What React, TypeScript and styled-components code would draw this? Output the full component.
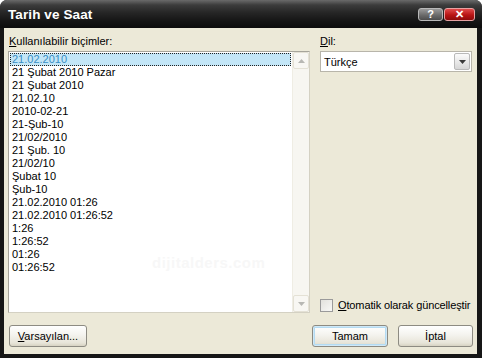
import styled, { createGlobalStyle } from "styled-components";

const GlobalStyle = createGlobalStyle`
  html, body {
    margin: 0;
    padding: 0;
    background: #ffffff;
  }
  body {
    font-family: "Liberation Sans", Arial, sans-serif;
    font-size: 11px;
    color: #000;
  }
`;

const Window = styled.div`
  width: 482px;
  height: 358px;
  display: flex;
  flex-direction: column;
  background: #161616;
  border-radius: 7px 7px 0 0;
  overflow: hidden;
`;

const TitleBar = styled.div`
  height: 28px;
  flex: none;
  display: flex;
  align-items: center;
  justify-content: space-between;
  padding: 0 7px 0 8px;
  background: linear-gradient(#6a6a6a 0, #3c3c3c 18%, #262626 45%, #151515 75%, #0c0c0c 100%);
`;

const Title = styled.span`
  color: #ffffff;
  font-weight: bold;
  font-size: 13.5px;
  letter-spacing: 0.1px;
`;

const Caption = styled.div`
  display: flex;
  gap: 1px;
  align-items: center;
`;

const CaptionButton = styled.div<{ $close?: boolean }>`
  width: ${(p) => (p.$close ? 31 : 25)}px;
  height: 13px;
  border-radius: 3px;
  border: 1px solid ${(p) => (p.$close ? "#e7a2a2" : "#b9b9b9")};
  box-sizing: border-box;
  display: flex;
  align-items: center;
  justify-content: center;
  color: #ffffff;
  font-weight: bold;
  font-size: 11px;
  background: ${(p) =>
    p.$close
      ? "linear-gradient(#e04a4a, #b81414 55%, #8e0b0b)"
      : "linear-gradient(#9a9a9a, #6b6b6b 55%, #4c4c4c)"};
`;

const Body = styled.div`
  flex: 1;
  margin: 0 5px 4px 4px;
  background: #ece9d8;
  padding: 7px 4px 7px 4px;
  display: grid;
  grid-template-columns: 302px 1fr;
  grid-template-rows: 1fr auto;
  column-gap: 10px;
  row-gap: 12px;
  min-height: 0;
`;

const Column = styled.div`
  display: flex;
  flex-direction: column;
  min-height: 0;
`;

const Label = styled.div<{ $indent?: number }>`
  line-height: 13px;
  height: 13px;
  margin: 0 0 3px ${(p) => p.$indent ?? 0}px;
  white-space: nowrap;
`;

const ListBox = styled.div`
  flex: 1;
  display: flex;
  border: 1px solid #a7a59b;
  border-right-color: #d4d1c3;
  border-bottom-color: #d4d1c3;
  background: #ffffff;
  min-height: 0;
`;

const Items = styled.div`
  position: relative;
  flex: 1;
  padding: 1px;
  overflow: hidden;
`;

const Item = styled.div<{ $selected?: boolean }>`
  height: 13px;
  box-sizing: border-box;
  white-space: nowrap;
  color: ${(p) => (p.$selected ? "#3b8fc4" : "#000")};
  background: ${(p) => (p.$selected ? "#c3e6f7" : "transparent")};
  border: ${(p) => (p.$selected ? "1px dotted #222" : "none")};
  padding-left: ${(p) => (p.$selected ? "1px" : "2px")};
  line-height: ${(p) => (p.$selected ? "11px" : "13px")};
`;

const Watermark = styled.div`
  position: absolute;
  left: 143px;
  top: 202px;
  font-size: 15px;
  font-weight: bold;
  color: #f7f7f7;
  letter-spacing: 0.5px;
`;

const ScrollBar = styled.div`
  width: 17px;
  flex: none;
  display: flex;
  flex-direction: column;
  background: #f7f6f1;
  border-left: 1px solid #efede4;
  box-sizing: border-box;
`;

const ScrollButton = styled.div`
  height: 17px;
  flex: none;
  box-sizing: border-box;
  border: 1px solid #e4e1d5;
  border-radius: 2px;
  background: #f8f7f3;
  display: flex;
  align-items: center;
  justify-content: center;
`;

const Track = styled.div`
  flex: 1;
`;

const Combo = styled.div`
  height: 21px;
  width: 152px;
  box-sizing: border-box;
  border: 1px solid #b8b5aa;
  background: #ffffff;
  display: flex;
  align-items: center;
  justify-content: space-between;
  padding: 1px 1px 1px 3px;
`;

const DropButton = styled.div`
  width: 16px;
  height: 17px;
  box-sizing: border-box;
  border: 1px solid #b9b9b9;
  border-radius: 2px;
  background: linear-gradient(#fbfbfb, #e6e6e6 60%, #d6d6d6);
  display: flex;
  align-items: center;
  justify-content: center;
`;

const Spacer = styled.div`
  flex: 1;
`;

const CheckRow = styled.label`
  display: flex;
  align-items: center;
  gap: 5px;
  height: 13px;
  line-height: 13px;
  margin: 0 0 1px 0;
  white-space: nowrap;
  letter-spacing: -0.12px;
`;

const CheckBox = styled.span`
  width: 13px;
  height: 13px;
  flex: none;
  box-sizing: border-box;
  border: 1px solid #9a9a9a;
  background: linear-gradient(135deg, #e2e1dc, #f8f8f6);
`;

const ButtonRow = styled.div`
  grid-column: 1 / -1;
  display: flex;
  justify-content: space-between;
  align-items: center;
`;

const ButtonGroup = styled.div`
  display: flex;
  gap: 10px;
`;

const Button = styled.div<{ $width: number; $default?: boolean }>`
  width: ${(p) => p.$width}px;
  height: 22px;
  box-sizing: border-box;
  border: 1px solid #8d8b82;
  border-radius: 3px;
  background: linear-gradient(#ffffff, #f4f3ee 45%, #e7e4d8 85%, #d6d2c2);
  display: flex;
  align-items: center;
  justify-content: center;
  box-shadow: ${(p) =>
    p.$default ? "inset 0 0 0 1px #cfe8f7, inset 0 0 0 2px #b4dbf2" : "none"};
`;

const LeftButton = styled(Button)`
  margin-left: 1px;
`;

const formats = [
  "21.02.2010",
  "21 Şubat 2010 Pazar",
  "21 Şubat 2010",
  "21.02.10",
  "2010-02-21",
  "21-Şub-10",
  "21/02/2010",
  "21 Şub. 10",
  "21/02/10",
  "Şubat 10",
  "Şub-10",
  "21.02.2010 01:26",
  "21.02.2010 01:26:52",
  "1:26",
  "1:26:52",
  "01:26",
  "01:26:52",
];

function Arrow({ up, color }: { up?: boolean; color: string }) {
  return (
    <svg width="7" height="4" viewBox="0 0 7 4">
      <polygon points={up ? "0,4 7,4 3.5,0" : "0,0 7,0 3.5,4"} fill={color} />
    </svg>
  );
}

export default function App() {
  return (
    <>
      <GlobalStyle />
      <Window>
        <TitleBar>
          <Title>Tarih ve Saat</Title>
          <Caption>
            <CaptionButton>?</CaptionButton>
            <CaptionButton $close>✕</CaptionButton>
          </Caption>
        </TitleBar>
        <Body>
          <Column>
            <Label $indent={1}>
              <u>K</u>ullanılabilir biçimler:
            </Label>
            <ListBox>
              <Items>
                {formats.map((f, i) => (
                  <Item key={f} $selected={i === 0}>
                    {f}
                  </Item>
                ))}
                <Watermark>dijitalders.com</Watermark>
              </Items>
              <ScrollBar>
                <ScrollButton>
                  <Arrow up color="#b8b8b4" />
                </ScrollButton>
                <Track />
                <ScrollButton>
                  <Arrow color="#b8b8b4" />
                </ScrollButton>
              </ScrollBar>
            </ListBox>
          </Column>
          <Column>
            <Label>
              <u>D</u>il:
            </Label>
            <Combo>
              <span>Türkçe</span>
              <DropButton>
                <Arrow color="#3a3a3a" />
              </DropButton>
            </Combo>
            <Spacer />
            <CheckRow>
              <CheckBox />
              <span>
                <u>O</u>tomatik olarak güncelleştir
              </span>
            </CheckRow>
          </Column>
          <ButtonRow>
            <LeftButton $width={78}>
              <span>
                <u>V</u>arsayılan...
              </span>
            </LeftButton>
            <ButtonGroup>
              <Button $width={76} $default>
                Tamam
              </Button>
              <Button $width={75}>İptal</Button>
            </ButtonGroup>
          </ButtonRow>
        </Body>
      </Window>
    </>
  );
}
